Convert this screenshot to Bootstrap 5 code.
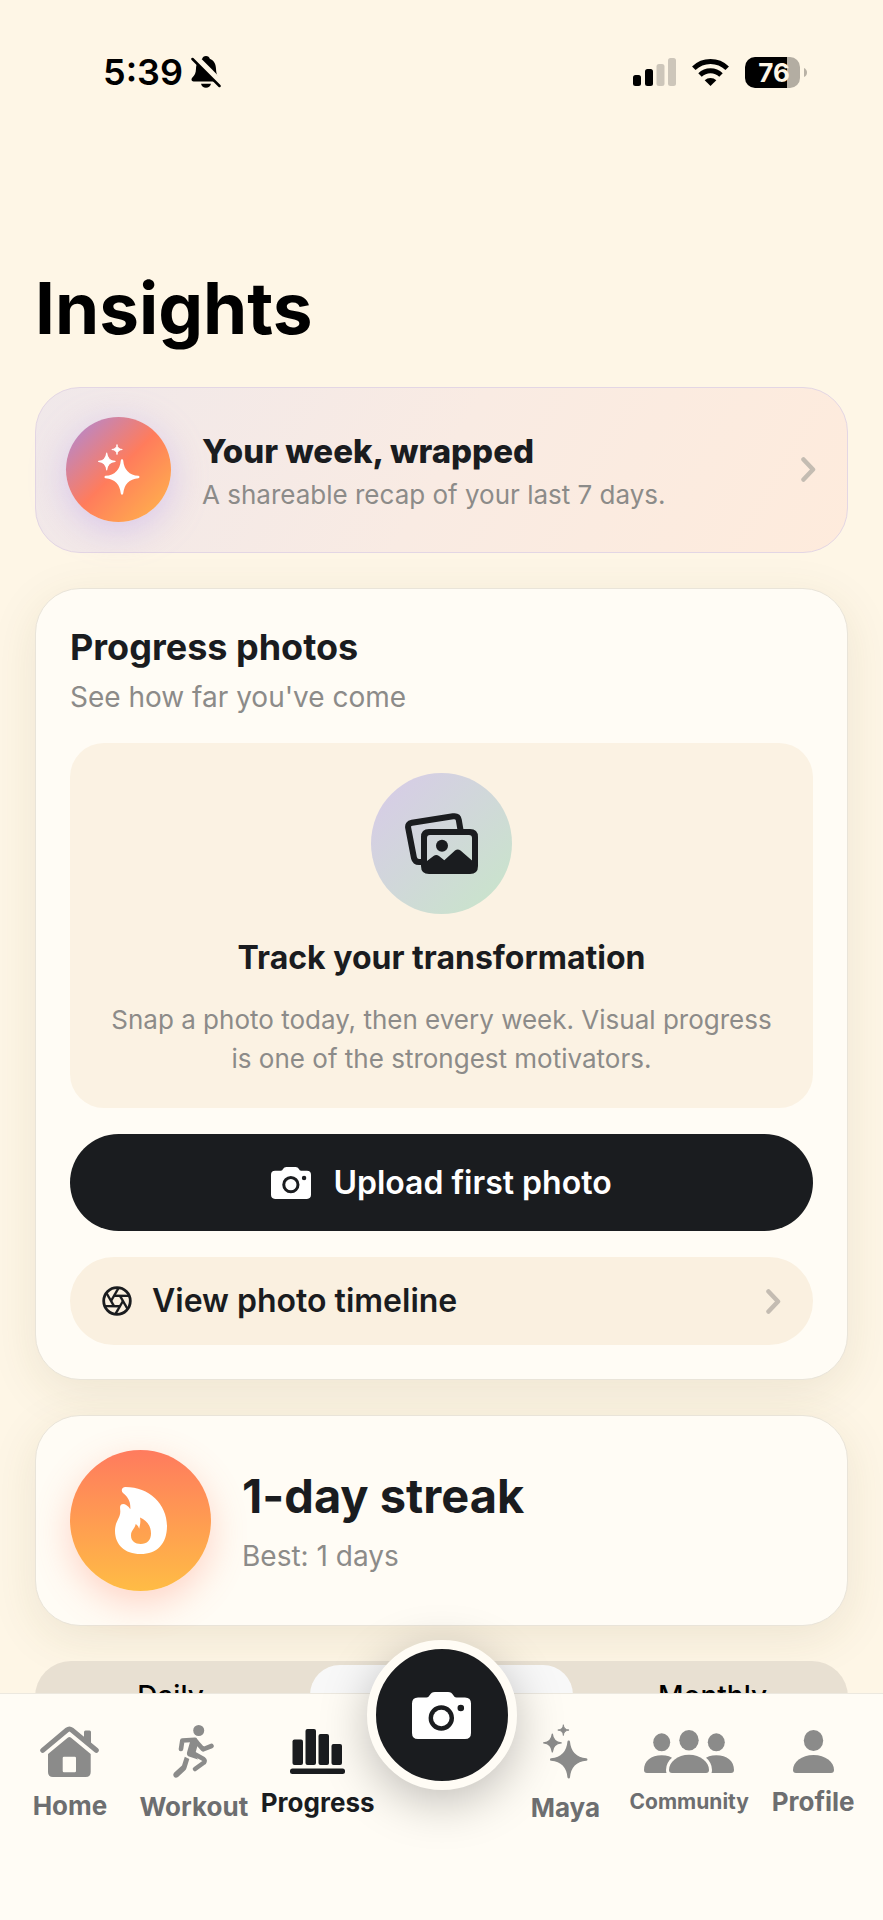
<!DOCTYPE html>
<html lang="en">
<head>
<meta charset="utf-8">
<meta name="viewport" content="width=device-width, initial-scale=1">
<title>Insights</title>
<link href="https://cdn.jsdelivr.net/npm/bootstrap@5.3.0/dist/css/bootstrap.min.css" rel="stylesheet">
<style>
  :root { --ink: #1a1c1f; --paper: #fffcf5; --cream: #fef6e6; --sand: #fbf2e3; --muted: #8c8b89; }
  body { font-family: Inter, "Liberation Sans", sans-serif; background: var(--cream); color: var(--ink); min-height: 100vh; }
  svg { display: block; flex: none; }
  .page { padding: 0 35px 160px; }
  .status { padding: 48px 76px 0 103px; height: 96px; color: #000; }
  .clock { font-size: 36px; line-height: 48px; font-weight: 600; }
  .battery { width: 55px; height: 31px; border-radius: 10px; font-size: 26px; line-height: 31px; font-weight: 700; color: var(--cream);
    background: linear-gradient(90deg, #000 42px, #b3ada2 42px); padding-left: 3px; }
  .page-title { font-size: 71px; line-height: 88px; font-weight: 700; color: #000; margin: 168px 0 35px; }
  .stack { display: flex; flex-direction: column; gap: 35px; }
  .panel { background: var(--paper); border: 1px solid #e9e4d9; border-radius: 45px; box-shadow: 0 12px 48px rgba(90, 75, 30, .1); padding: 34px; }
  .wrapped { background: linear-gradient(120deg, #f0e8ea 0%, #f9ebe3 50%, #feebdc 100%); border: 1px solid #e3d6e4; border-radius: 45px; padding: 29px 31px 30px 30px; gap: 31px; }
  .orb { border-radius: 50%; display: flex; align-items: center; justify-content: center; flex: none; }
  .orb-recap { width: 105px; height: 105px; background: linear-gradient(135deg, #a98ae0 0%, #ff7c5c 50%, #ffb94a 100%); box-shadow: 0 8px 36px rgba(170, 140, 240, .38); }
  .orb-photos { width: 141px; height: 141px; background: linear-gradient(135deg, #d8cae9, #c8e6c9); margin-bottom: 24px; }
  .orb-streak { width: 141px; height: 141px; background: linear-gradient(180deg, #ff7b5e, #ffbc45); box-shadow: 0 12px 36px rgba(255, 120, 90, .3); }
  .t-lg { font-size: 47px; line-height: 58px; font-weight: 700; margin-bottom: 13px; }
  .t-md { font-size: 36px; line-height: 48px; font-weight: 700; }
  .t-sm { font-size: 32px; line-height: 40px; }
  .recap-text { padding-top: 6px; }
  .recap-title { font-size: 33px; line-height: 40px; font-weight: 800; margin-bottom: 4px; }
  .sub { font-size: 28px; line-height: 36px; color: var(--muted); }
  .note { font-size: 26px; line-height: 39px; color: var(--muted); }
  .chev { color: #c4bcb2; }
  .inset { background: var(--sand); border-radius: 34px; padding: 30px; margin: 28px 0 26px; }
  .inset h3 { margin-bottom: 22px; }
  .btn-upload, .btn-upload:hover { background: var(--ink); color: #fff; height: 97px; border-radius: 49px; gap: 22px; }
  .btn-timeline, .btn-timeline:hover { background: #faf0e0; color: var(--ink); height: 88px; border-radius: 44px; padding: 0 32px; margin-top: 26px; gap: 20px; }
  .streak { gap: 31px; }
  .segments { background: #e8e0d2; border-radius: 36px; padding: 4px 0; height: 88px; color: #000; }
  .segments label { border-radius: 30px; margin: 0 4px; font-size: 28px; line-height: 48px; font-weight: 500; padding-top: 7px; }
  .segments input:checked + label { background: #f8f8f8; }
  .tabbar { background: var(--paper); border-top: 1px solid #ece8df; padding: 0 8px 66px; }
  .tabbar ul { height: 160px; }
  .tab { display: flex; flex-direction: column; align-items: center; gap: 13px; color: #6d6e70; font-size: 26px; line-height: 32px; font-weight: 700; white-space: nowrap; text-decoration: none; }
  .tab svg { color: #8b8b8a; }
  .tab.active, .tab.active svg { color: var(--ink); }
  .tab-small { font-size: 21px; }
  .shutter { width: 150px; height: 150px; top: -54px; left: 50%; margin-left: -75px; border: 9px solid var(--paper); background: var(--ink); color: #fff; box-shadow: 0 12px 48px rgba(0, 0, 0, .25); }
</style>
</head>
<body>
<svg width="0" height="0" class="position-absolute" aria-hidden="true">
  <symbol id="sparkles" viewBox="0 0 42 51">
    <g fill="currentColor" stroke="currentColor" stroke-linejoin="round">
      <path stroke-width="2.400" d="M24 16.500Q25.400 31.600 40.300 33 25.400 34.400 24 49.500 22.600 34.400 7.700 33 22.600 31.600 24 16.500Z"/>
      <path stroke-width="1.200" d="M8.700 9.200Q9.400 16.700 17 17.400 9.400 18.100 8.700 25.800 8 18.100 .6 17.400 8 16.700 8.700 9.200Z"/>
      <path stroke-width=".8" d="M19 .5Q19.400 5.100 24.300 5.500 19.400 5.900 19 10.600 18.600 5.900 13.800 5.500 18.600 5.100 19 .5Z"/>
    </g>
  </symbol>
  <symbol id="camera" viewBox="0 0 59 47">
    <path fill="currentColor" fill-rule="evenodd" d="M6 5.500H14.500C18 5.500 17.500 0 23 0H36C41.500 0 41 5.500 44.500 5.500H53Q59 5.500 59 11.500V41Q59 47 53 47H6Q0 47 0 41V11.500Q0 5.500 6 5.500ZM29.300 13.300a12.700 12.700 0 1 0 0 25.400a12.700 12.700 0 1 0 0-25.400ZM48.800 12.700a3.300 3.300 0 1 0 0 6.600a3.300 3.300 0 1 0 0-6.600Z"/>
    <circle cx="29.300" cy="26" r="8.300" fill="currentColor"/>
  </symbol>
  <symbol id="chevron" viewBox="0 0 15 25">
    <path d="M2.500 2.500 12 12.500 2.500 22.500" fill="none" stroke="currentColor" stroke-width="4.500" stroke-linecap="round" stroke-linejoin="round"/>
  </symbol>
</svg>

<header class="status d-flex align-items-center justify-content-between">
  <div class="d-flex align-items-center gap-2">
    <span class="clock">5:39</span>
    <svg width="30" height="32" viewBox="0 0 30 32" role="img" aria-label="Silent mode">
      <path fill="currentColor" d="M15 0c2 0 3.500 1.200 3.800 2.800 4 1.600 6 5 6.200 10 .2 5 1.200 7 3.200 9 1.200 1.400.8 3.700-1.300 3.700H2.600C.2 25.500 0 23 1.400 21.600c2.300-2.300 3.400-4.400 3.600-8.800.2-5 2.200-8.400 6.200-10C11.500 1.200 13 0 15 0ZM10 27.800h10c-.6 2.400-2.500 4-5 4s-4.400-1.600-5-4Z"/>
      <path d="M2 -1 31 28" stroke="#fef6e6" stroke-width="6.500"/>
      <path d="M1.500 3 28.500 30" stroke="currentColor" stroke-width="2.500" stroke-linecap="round"/>
    </svg>
  </div>
  <div class="d-flex align-items-center gap-3">
    <svg width="43" height="28" viewBox="0 0 43 28" role="img" aria-label="Signal">
      <rect y="17" width="8" height="11" rx="2.500"/><rect x="12" y="11" width="8" height="17" rx="2.500"/>
      <g fill="#cdc6ba"><rect x="23.500" y="6" width="8" height="22" rx="2.500"/><rect x="35" width="8" height="28" rx="2.500"/></g>
    </svg>
    <svg width="37" height="27" viewBox="0 0 37 27" role="img" aria-label="Wi-Fi">
      <g fill="none" stroke="currentColor" stroke-width="5"><path d="M1.800 9.300a24 24 0 0 1 33.400 0M8 16a15.200 15.200 0 0 1 21 0"/></g>
      <path fill="currentColor" d="M12.700 21.300a8.500 8.500 0 0 1 11.600 0L18.500 27Z"/>
    </svg>
    <div class="d-flex align-items-center gap-1">
      <div class="battery text-center">76</div>
      <svg width="3" height="9" viewBox="0 0 3 9"><path fill="#b9b2a6" d="M0 0q3 1.500 3 4.500T0 9Z"/></svg>
    </div>
  </div>
</header>

<main class="page">
  <h1 class="page-title">Insights</h1>
  <div class="stack">
    <a href="#recap" class="wrapped d-flex align-items-center text-decoration-none text-reset">
      <span class="orb orb-recap text-white"><svg width="42" height="51"><use href="#sparkles"/></svg></span>
      <span class="recap-text d-flex flex-column flex-grow-1">
        <span class="recap-title">Your week, wrapped</span>
        <span class="note">A shareable recap of your last 7 days.</span>
      </span>
      <svg class="chev" width="15" height="25"><use href="#chevron"/></svg>
    </a>

    <section class="panel">
      <h2 class="t-md mb-2">Progress photos</h2>
      <p class="sub mb-0">See how far you've come</p>
      <div class="inset d-flex flex-column align-items-center text-center">
        <div class="orb orb-photos">
          <svg width="73" height="61" viewBox="0 0 73 61">
            <path d="M17 49h-3q-4 0-5-4L3.200 15q-.8-4.500 3.800-5.300L48 3.300q5-.8 5.800 3.700L55.500 17" fill="none" stroke="currentColor" stroke-width="6"/>
            <path fill="currentColor" fill-rule="evenodd" d="M24 16H65Q73 16 73 24V53Q73 61 65 61H24Q16 61 16 53V24Q16 16 24 16ZM25 22Q22 22 22 25V48L28.500 43Q31.300 41 34 43L39.300 47.300 50 37.500Q52.700 35.500 55.500 37.500L67 47.500V25Q67 22 64 22Z"/>
            <circle cx="37" cy="32.700" r="6" fill="currentColor"/>
          </svg>
        </div>
        <h3 class="t-sm fw-bold">Track your transformation</h3>
        <p class="note mb-0">Snap a photo today, then every week. Visual progress is one of the strongest motivators.</p>
      </div>
      <button type="button" class="btn btn-upload border-0 w-100 d-flex align-items-center justify-content-center t-sm fw-semibold">
        <svg width="40" height="32"><use href="#camera"/></svg>Upload first photo
      </button>
      <a href="#timeline" class="btn btn-timeline border-0 d-flex align-items-center t-sm fw-semibold">
        <svg width="30" height="30" viewBox="0 0 30 30" fill="none" stroke="currentColor" stroke-width="2.400">
          <circle cx="15" cy="15" r="13.300" stroke-width="2.800"/>
          <path d="M21 15 13.500 27.900"/><path d="M21 15 13.500 27.900" transform="rotate(60 15 15)"/><path d="M21 15 13.500 27.900" transform="rotate(120 15 15)"/><path d="M21 15 13.500 27.900" transform="rotate(180 15 15)"/><path d="M21 15 13.500 27.900" transform="rotate(240 15 15)"/><path d="M21 15 13.500 27.900" transform="rotate(300 15 15)"/>
        </svg>
        <span>View photo timeline</span>
        <svg class="chev ms-auto" width="15" height="25"><use href="#chevron"/></svg>
      </a>
    </section>

    <section class="panel streak d-flex align-items-center">
      <div class="orb orb-streak text-white">
        <svg width="52" height="67" viewBox="0 0 52 67">
          <path fill="currentColor" fill-rule="evenodd" d="M10.500 0C34 0 52 17 52 39C52 57 42 67 25.500 67C9.500 67 0 57.500 0 44C0 34 5.300 31.500 5.300 24.500C5.300 22 4.800 21 5.200 19.300C6 16.500 9 16.500 11.500 18.300Q14 20 15.300 22.300C15.800 15 13.500 10.500 8 6C5.500 3.500 7 0 10.500 0ZM25 30.500C26 36 24.800 38 24.200 41.700Q23.500 38.500 20.700 37C20 41.500 16 43 16 48.500C16 54 20 57 25.800 57C32 57 36 53 36 46.500C36 38.500 31.500 33.500 25 30.500Z"/>
        </svg>
      </div>
      <div>
        <h2 class="t-lg">1-day streak</h2>
        <p class="sub mb-0">Best: 1 days</p>
      </div>
    </section>

    <div class="segments d-flex text-center" role="radiogroup" aria-label="Period">
      <input class="visually-hidden" type="radio" name="period" id="daily"><label class="w-100" for="daily">Daily</label>
      <input class="visually-hidden" type="radio" name="period" id="weekly" checked><label class="w-100" for="weekly">Weekly</label>
      <input class="visually-hidden" type="radio" name="period" id="monthly"><label class="w-100" for="monthly">Monthly</label>
    </div>
  </div>
</main>

<nav class="tabbar fixed-bottom" aria-label="Main">
  <ul class="list-unstyled row flex-nowrap g-0 align-items-center mb-0">
    <li class="col"><a class="tab" href="#home">
      <svg width="59" height="51" viewBox="0 0 59 51" fill="currentColor">
        <path d="M44 6q0-1.500 1.500-1.500h4q1.500 0 1.500 1.500V21L44 15Z"/>
        <path d="M2.700 24.300 27 4Q29.400 2 31.800 4L56.300 24.300" fill="none" stroke="currentColor" stroke-width="5" stroke-linecap="round"/>
        <path fill-rule="evenodd" d="M8 28 28 11.500Q29.400 10.500 30.800 11.500L50.700 28V46Q50.700 51 45.700 51H13Q8 51 8 46ZM24 30.700Q22.700 30.700 22.700 32V45Q22.700 46.300 24 46.300H34.800Q36 46.300 36 45V32Q36 30.700 34.800 30.700Z"/>
      </svg>Home</a></li>
    <li class="col"><a class="tab" href="#workout">
      <svg width="41" height="53" viewBox="0 0 41 53" fill="none" stroke="currentColor" stroke-width="4.600" stroke-linecap="round" stroke-linejoin="round">
        <circle cx="25.700" cy="5.500" r="5.500" fill="currentColor" stroke="none"/>
        <path d="M8 24 9.300 15.500 22 14.800M23.500 17 30 24.300 38.500 21"/>
        <path d="M21.500 29 30.500 34Q32.500 35.500 31 37.500L22 44"/>
        <path fill="currentColor" stroke="none" d="M15.500 14H24Q26 15 25.300 18L22 29.500 25 34.500 16 31.500Q13.500 30.500 14 27.500L17 17Z"/>
        <path d="M11.800 31.800 16.300 34 13.500 43Q13 44.500 12 45.500L5 52Q2.500 53.600.8 51.500 -.5 49.500 1.300 47.500L9 40.500Z" fill="currentColor" stroke="none"/>
      </svg>Workout</a></li>
    <li class="col"><a class="tab active" href="#progress" aria-current="page">
      <svg width="55" height="45" viewBox="0 0 55 45" fill="currentColor">
        <rect x="2.500" y="10.500" width="10.500" height="25.500" rx="2"/><rect x="15.500" width="10.500" height="36" rx="2"/><rect x="28.500" y="5" width="10.500" height="31" rx="2"/><rect x="41.500" y="15" width="10.500" height="21" rx="2"/><rect y="39.500" width="55" height="5.500" rx="2.500"/>
      </svg>Progress</a></li>
    <li class="col align-self-start position-relative">
      <button type="button" class="shutter orb position-absolute p-0" aria-label="Take photo"><svg width="59" height="47"><use href="#camera"/></svg></button>
    </li>
    <li class="col"><a class="tab" href="#maya"><svg width="45" height="55"><use href="#sparkles"/></svg>Maya</a></li>
    <li class="col"><a class="tab tab-small" href="#community">
      <svg width="90" height="43" viewBox="0 0 90 43" fill="currentColor">
        <ellipse cx="17.700" cy="12.300" rx="8.500" ry="9"/><ellipse cx="72.300" cy="12.300" rx="8.500" ry="9"/><ellipse cx="45" cy="10.300" rx="9.700" ry="10.300"/>
        <path d="M3 43Q0 43 0 40C0 31 7 25.300 17.700 25.300S35 31 35 43ZM87 43Q90 43 90 40C90 31 83 25.300 72.300 25.300S55 31 55 43Z"/>
        <path stroke="#fffcf5" stroke-width="6" paint-order="stroke" d="M28 43Q25 43 25 40C25 32 33.500 24.700 45 24.700S65 32 65 40Q65 43 62 43Z"/>
      </svg>Community</a></li>
    <li class="col"><a class="tab" href="#profile">
      <svg width="41" height="43" viewBox="0 0 41 43" fill="currentColor"><ellipse cx="20.500" cy="10.500" rx="9.700" ry="10.500"/><path d="M3 43Q0 43 0 40C0 32 8.500 25 20.500 25S41 32 41 40Q41 43 38 43Z"/></svg>Profile</a></li>
  </ul>
</nav>
<script src="https://cdn.jsdelivr.net/npm/bootstrap@5.3.0/dist/js/bootstrap.bundle.min.js"></script>
</body>
</html>
